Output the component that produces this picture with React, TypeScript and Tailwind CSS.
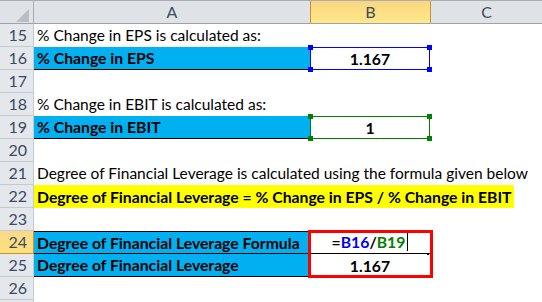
const font = { fontFamily: 'Lato, "Liberation Sans", sans-serif' };

const RowNum = ({ n, active }: { n?: number; active?: boolean }) => (
  <div
    className={
      active
        ? 'w-[34px] shrink-0 h-full flex items-center justify-end pr-[6px] text-[16px] text-[#3b4a5c] bg-gradient-to-b from-[#f9d98b] to-[#ffe27a] border-r border-b border-[#c9912f]'
        : 'w-[34px] shrink-0 h-full flex items-center justify-end pr-[6px] text-[16px] text-[#3b4a5c] bg-[#e4e7ec] border-r border-b border-[#c5cad0]'
    }
  >
    {n}
  </div>
);

const Handles = ({ color }: { color: string }) => (
  <>
    <span className={`absolute -left-[3px] -top-[3px] w-[5px] h-[5px] ${color}`} />
    <span className={`absolute -right-[3px] -top-[3px] w-[5px] h-[5px] ${color}`} />
    <span className={`absolute -left-[3px] -bottom-[3px] w-[5px] h-[5px] ${color}`} />
    <span className={`absolute -right-[3px] -bottom-[3px] w-[5px] h-[5px] ${color}`} />
  </>
);

export default function App() {
  return (
    <div className="w-[542px] h-[302px] overflow-hidden bg-white text-black" style={font}>
      {/* column headers */}
      <div className="flex h-[24px] border-t border-[#a9aeb5] border-b border-b-[#9ea3aa] bg-[#dfe3e8] text-[#3b4a5c] text-[16px]">
        <div className="w-[34px] shrink-0 relative border-r border-[#a9aeb5]">
          <svg className="absolute left-[16px] top-[8px]" width="14" height="13" viewBox="0 0 14 13">
            <polygon points="13,0 13,13 0,13" fill="#b9bec4" />
          </svg>
        </div>
        <div className="w-[276px] shrink-0 flex items-center justify-center">A</div>
        <div className="w-[121px] shrink-0 flex items-center justify-center bg-gradient-to-b from-[#f8d77f] to-[#ffe98a] border-x border-[#c9912f]">
          B
        </div>
        <div className="flex-1 flex items-center justify-center">C</div>
      </div>

      {/* row 15 */}
      <div className="flex h-[23px]">
        <RowNum n={15} />
        <div className="flex-1 flex items-center pl-[3px] text-[15.5px] whitespace-nowrap">
          % Change in EPS is calculated as:
        </div>
      </div>

      {/* row 16 */}
      <div className="flex h-[23px]">
        <RowNum n={16} />
        <div className="w-[276px] shrink-0 flex items-center pl-[3px] bg-[#00b0f0] border-b border-black font-bold text-[15.75px] whitespace-nowrap">
          % Change in EPS
        </div>
        <div className="w-[120px] shrink-0 relative flex items-center justify-center font-bold text-[15.75px] border border-[#0000ff]">
          1.167
          <Handles color="bg-[#0000ff]" />
        </div>
        <div className="flex-1" />
      </div>

      {/* row 17 */}
      <div className="flex h-[23px]">
        <RowNum n={17} />
        <div className="flex-1" />
      </div>

      {/* row 18 */}
      <div className="flex h-[23px]">
        <RowNum n={18} />
        <div className="flex-1 flex items-center pl-[3px] text-[15.5px] whitespace-nowrap">
          % Change in EBIT is calculated as:
        </div>
      </div>

      {/* row 19 */}
      <div className="flex h-[23px]">
        <RowNum n={19} />
        <div className="w-[276px] shrink-0 flex items-center pl-[3px] bg-[#00b0f0] border-b border-black font-bold text-[15.75px] whitespace-nowrap">
          % Change in EBIT
        </div>
        <div className="w-[120px] shrink-0 relative flex items-center justify-center font-bold text-[15.75px] border border-[#008000]">
          1
          <Handles color="bg-[#008000]" />
        </div>
        <div className="flex-1" />
      </div>

      {/* row 20 */}
      <div className="flex h-[23px]">
        <RowNum n={20} />
        <div className="flex-1" />
      </div>

      {/* row 21 */}
      <div className="flex h-[23px]">
        <RowNum n={21} />
        <div className="flex-1 flex items-center pl-[3px] text-[15.5px] whitespace-nowrap">
          Degree of Financial Leverage is calculated using the formula given below
        </div>
      </div>

      {/* row 22 */}
      <div className="flex h-[23px]">
        <RowNum n={22} />
        <div className="flex-1 flex items-stretch">
          <span className="flex items-center pl-[3px] pr-[2px] bg-[#ffff00] font-bold text-[15.75px] whitespace-nowrap">
            Degree of Financial Leverage = % Change in EPS / % Change in EBIT
          </span>
        </div>
      </div>

      {/* row 23 */}
      <div className="flex h-[23px]">
        <RowNum n={23} />
        <div className="flex-1" />
      </div>

      {/* rows 24-25 */}
      <div className="flex h-[46px]">
        <div className="flex flex-col w-[34px] shrink-0">
          <div className="h-[23px]">
            <RowNum n={24} active />
          </div>
          <div className="h-[23px]">
            <RowNum n={25} />
          </div>
        </div>
        <div className="w-[276px] shrink-0 flex flex-col bg-[#00b0f0] font-bold text-[15.75px] whitespace-nowrap">
          <div className="h-[23px] flex items-center pl-[3px] border-t border-b border-black">
            Degree of Financial Leverage Formula
          </div>
          <div className="h-[23px] flex items-center pl-[3px] border-b border-black">
            Degree of Financial Leverage
          </div>
        </div>
        <div className="w-[120px] shrink-0 relative flex flex-col font-bold text-[15.75px]">
          <div className="h-[23px] flex items-center justify-center border-b border-black">
            <span>=</span>
            <span className="text-[#0000ff]">B16</span>
            <span>/</span>
            <span className="text-[#008000]">B19</span>
            <span className="inline-block w-px h-[18px] bg-black ml-[2px]" />
          </div>
          <div className="h-[23px] flex items-center justify-center">1.167</div>
          <div className="absolute -left-[2px] -top-[1px] -right-[3px] -bottom-[1px] border-[3px] border-[#ff0000]" />
          <span className="absolute right-[1px] top-[22px] w-[2px] h-[2px] bg-black" />
        </div>
        <div className="flex-1" />
      </div>

      {/* row 26 */}
      <div className="flex h-[23px]">
        <RowNum n={26} />
        <div className="flex-1" />
      </div>

      {/* row 27, only its top edge is in view */}
      <div className="flex h-[23px]">
        <RowNum />
        <div className="flex-1" />
      </div>
    </div>
  );
}
